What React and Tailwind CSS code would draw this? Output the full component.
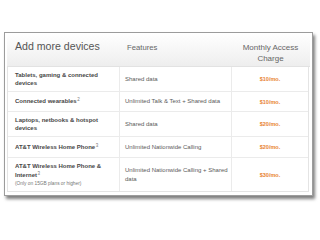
import React from "react";

const rows = [
  { name: ["Tablets, gaming & connected devices"], sup: null, feat: "Shared data", price: "$10/mo.", h: "h-[25px]" },
  { name: ["Connected wearables"], sup: "2", feat: "Unlimited Talk & Text + Shared data", price: "$10/mo.", h: "h-[20px]" },
  { name: ["Laptops, netbooks & hotspot devices"], sup: null, feat: "Shared data", price: "$20/mo.", h: "h-[25px]" },
  { name: ["AT&T Wireless Home Phone"], sup: "3", feat: "Unlimited Nationwide Calling", price: "$20/mo.", h: "h-[21px]" },
  { name: ["AT&T Wireless Home Phone & Internet"], sup: "3", note: "(Only on 15GB plans or higher)", feat: "Unlimited Nationwide Calling + Shared data", price: "$30/mo.", h: "h-[33px]" },
];

export default function App() {
  return (
    <div className="w-[320px] h-[240px] bg-white pt-[32px] pl-[4px] font-['Liberation_Sans',Arial,sans-serif]">
      <div className="w-[309px] h-[164px] border border-[#9c9c9c] bg-white shadow-[2px_3px_3px_rgba(0,0,0,0.5)] flex flex-col">
        <div className="h-[34px] bg-linear-to-b from-white to-[#eeeeee] border-b border-[#e2e2e2] mx-[2px] grid grid-cols-[113px_112px_77px]">
          <div className="pl-[8px] pt-[7px] text-[10.6px] leading-[13px] text-[#555555]">Add more devices</div>
          <div className="pl-[7px] pt-[9px] text-[7.7px] leading-[11px] text-[#666666]">Features</div>
          <div className="pt-[9px] text-[8px] leading-[11px] text-[#666666] text-center">
            Monthly Access
            <br />
            Charge
          </div>
        </div>
        <div className="mx-[2px] mr-[3px] border-x border-b border-[#e4e4e4] flex flex-col">
          {rows.map((r, i) => (
            <div
              key={i}
              className={`grid grid-cols-[112px_112px_76px] ${r.h} ${i < rows.length - 1 ? "border-b border-[#ebebeb]" : ""}`}
            >
              <div className="pl-[7px] pr-[8px] flex flex-col justify-center border-r border-[#ebebeb]">
                <div className="text-[6px] leading-[8.5px] font-bold text-[#474747]">
                  {r.name[0]}
                  {r.sup && (
                    <span className="relative -top-[2px] ml-[0.5px] text-[4.5px] font-normal text-[#777777] leading-none">
                      {r.sup}
                    </span>
                  )}
                </div>
                {r.note && (
                  <div className="mt-[1px] text-[4.8px] leading-[7px] text-[#777777]">{r.note}</div>
                )}
              </div>
              <div className="pl-[5px] pr-[1px] flex items-center border-r border-[#ebebeb]">
                <div className="text-[6px] leading-[8.5px] text-[#5a5a5a]">{r.feat}</div>
              </div>
              <div className="flex items-center justify-center">
                <div className="text-[5.5px] font-bold text-[#e8832f] leading-[8px]">{r.price}</div>
              </div>
            </div>
          ))}
        </div>
      </div>
    </div>
  );
}
